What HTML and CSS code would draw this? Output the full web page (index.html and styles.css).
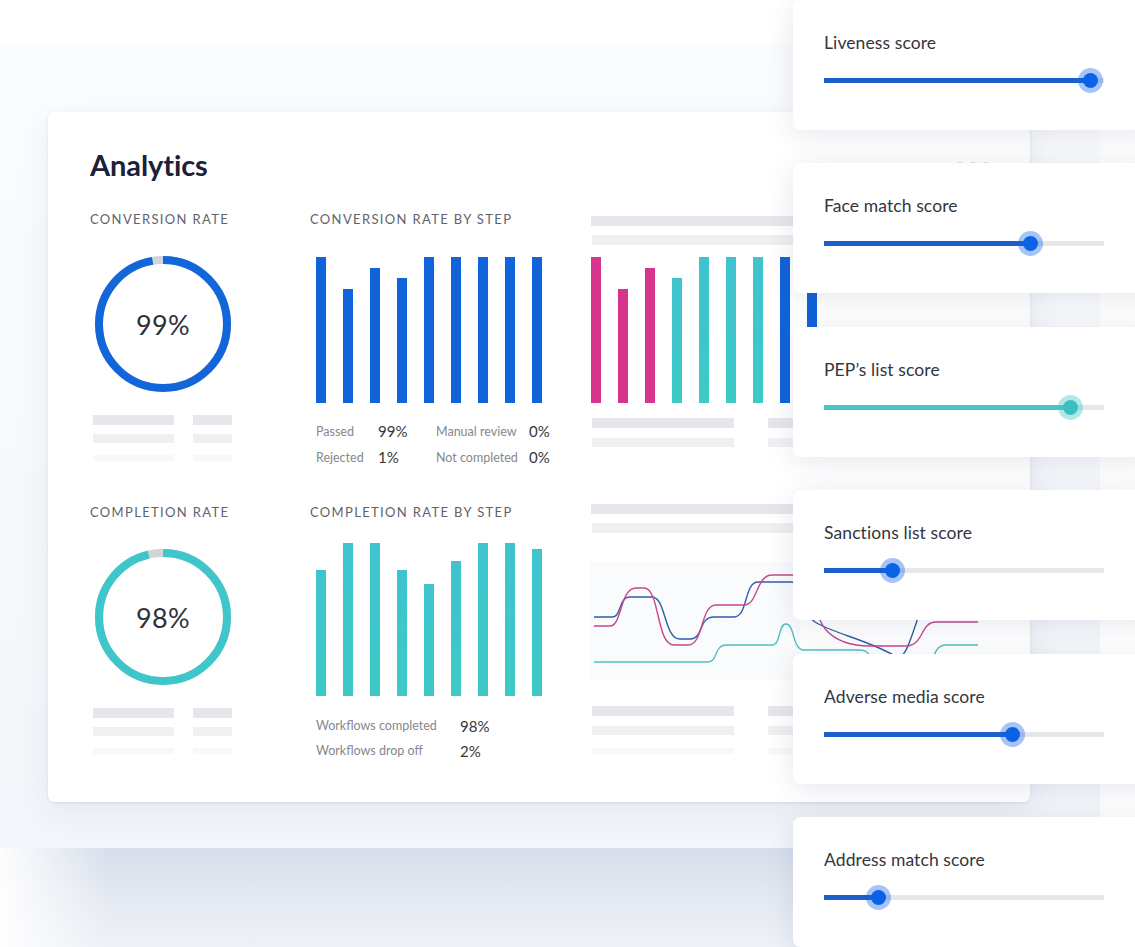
FILE: index.html
```html
<!DOCTYPE html>
<html lang="en">
<head>
<meta charset="utf-8">
<title>Analytics</title>
<link rel="stylesheet" href="styles.css">
</head>
<body>
<div class="stage">
  <div class="backdrop"></div>
  <div class="backshadow"></div>

  <section class="analytics">
    <h1 class="title">Analytics</h1>
    <div class="menu-dots"><span></span><span></span><span></span></div>

    <div class="row">
      <div class="col col-rate">
        <div class="label">Conversion rate</div>
        <div class="donut">
          <svg width="136" height="136" viewBox="0 0 136 136">
            <circle cx="68" cy="68" r="64" fill="none" stroke="#d3d4d8" stroke-width="8"/>
            <circle cx="68" cy="68" r="64" fill="none" stroke="#1366da" stroke-width="8" stroke-dasharray="391 402" transform="rotate(-90 68 68)"/>
          </svg>
          <span class="donut-val">99%</span>
        </div>
        <div class="ph-pair">
          <i class="ph ph-1 w81"></i><i class="ph ph-1 w39"></i>
          <i class="ph ph-2 w81"></i><i class="ph ph-2 w39"></i>
          <i class="ph ph-3 w81"></i><i class="ph ph-3 w39"></i>
        </div>
      </div>

      <div class="col col-step">
        <div class="label">Conversion rate by step</div>
        <div class="bars bars-a">
          <i class="bar blue" style="height:146px"></i>
          <i class="bar blue" style="height:114px"></i>
          <i class="bar blue" style="height:135px"></i>
          <i class="bar blue" style="height:125px"></i>
          <i class="bar blue" style="height:146px"></i>
          <i class="bar blue" style="height:146px"></i>
          <i class="bar blue" style="height:146px"></i>
          <i class="bar blue" style="height:146px"></i>
          <i class="bar blue" style="height:146px"></i>
        </div>
        <div class="legend legend-a">
          <span class="lg-l">Passed</span><span class="lg-v">99%</span><span class="lg-l">Manual review</span><span class="lg-v">0%</span>
          <span class="lg-l">Rejected</span><span class="lg-v">1%</span><span class="lg-l">Not completed</span><span class="lg-v">0%</span>
        </div>
      </div>

      <div class="col col-ghost">
        <div class="ph-lines">
          <i class="ph ph-1 wide"></i>
          <i class="ph ph-2 wide"></i>
        </div>
        <div class="bars bars-a bars-ghost">
          <i class="bar pink" style="height:146px"></i>
          <i class="bar pink" style="height:114px"></i>
          <i class="bar pink" style="height:135px"></i>
          <i class="bar teal" style="height:125px"></i>
          <i class="bar teal" style="height:146px"></i>
          <i class="bar teal" style="height:146px"></i>
          <i class="bar teal" style="height:146px"></i>
          <i class="bar blue" style="height:146px"></i>
          <i class="bar blue" style="height:146px"></i>
        </div>
        <div class="ph-pair ph-pair-b">
          <i class="ph ph-1 w142"></i><i class="ph ph-1 w60"></i>
          <i class="ph ph-2 w142"></i><i class="ph ph-2 w60"></i>
        </div>
      </div>
    </div>

    <div class="row">
      <div class="col col-rate">
        <div class="label">Completion rate</div>
        <div class="donut">
          <svg width="136" height="136" viewBox="0 0 136 136">
            <circle cx="68" cy="68" r="64" fill="none" stroke="#d3d4d8" stroke-width="8"/>
            <circle cx="68" cy="68" r="64" fill="none" stroke="#3ec6cb" stroke-width="8" stroke-dasharray="387 402" transform="rotate(-90 68 68)"/>
          </svg>
          <span class="donut-val">98%</span>
        </div>
        <div class="ph-pair">
          <i class="ph ph-1 w81"></i><i class="ph ph-1 w39"></i>
          <i class="ph ph-2 w81"></i><i class="ph ph-2 w39"></i>
          <i class="ph ph-3 w81"></i><i class="ph ph-3 w39"></i>
        </div>
      </div>

      <div class="col col-step">
        <div class="label">Completion rate by step</div>
        <div class="bars bars-b">
          <i class="bar teal" style="height:126px"></i>
          <i class="bar teal" style="height:153px"></i>
          <i class="bar teal" style="height:153px"></i>
          <i class="bar teal" style="height:126px"></i>
          <i class="bar teal" style="height:112px"></i>
          <i class="bar teal" style="height:135px"></i>
          <i class="bar teal" style="height:153px"></i>
          <i class="bar teal" style="height:153px"></i>
          <i class="bar teal" style="height:147px"></i>
        </div>
        <div class="legend legend-b">
          <span class="lg-l">Workflows completed</span><span class="lg-v">98%</span>
          <span class="lg-l">Workflows drop off</span><span class="lg-v">2%</span>
        </div>
      </div>

      <div class="col col-ghost">
        <div class="ph-lines ph-lines-b">
          <i class="ph ph-1 wide"></i>
          <i class="ph ph-2 wide"></i>
        </div>
        <svg class="waves" width="390" height="110" viewBox="590 560 390 110">
          <rect x="590" y="562" width="210" height="118" fill="#fafbfc"/>
          <path d="M594 662 H708 C718 662 714 645 726 645 H772 C781 645 778 624 786 624 C795 624 792 650 804 650 H860 C872 650 870 664 884 664 H924 C936 664 932 645 946 645 H978" fill="none" stroke="#52c0c4" stroke-width="1.4"/>
          <path d="M594 617 H612 C622 617 618 597 630 597 H652 C666 597 664 639 680 639 H690 C704 639 698 617 714 617 H734 C748 617 744 582 758 582 H790 C806 582 800 612 815 622 C835 634 868 640 895 656 C905 662 910 640 918 618 C924 600 930 590 950 590 H978" fill="none" stroke="#2f5ea6" stroke-width="1.4"/>
          <path d="M594 626 H610 C622 626 620 588 636 588 H644 C660 588 656 645 674 645 H688 C704 645 700 605 716 605 H744 C758 605 756 575 772 575 H796 C812 575 812 615 826 630 C836 641 850 646 870 646 H906 C924 646 920 622 936 622 H978" fill="none" stroke="#c9478c" stroke-width="1.4"/>
        </svg>
        <div class="ph-pair ph-pair-c">
          <i class="ph ph-1 w142"></i><i class="ph ph-1 w60"></i>
          <i class="ph ph-2 w142"></i><i class="ph ph-2 w60"></i>
          <i class="ph ph-3 w142"></i><i class="ph ph-3 w60"></i>
        </div>
      </div>
    </div>
  </section>

  <div class="sliders">
    <div class="s-card">
      <div class="s-label">Liveness score</div>
      <div class="track"><div class="fill" style="width:267px"><span class="thumb"></span></div></div>
    </div>
    <div class="s-card">
      <div class="s-label">Face match score</div>
      <div class="track"><div class="fill" style="width:207px"><span class="thumb"></span></div></div>
    </div>
    <div class="s-card">
      <div class="s-label">PEP’s list score</div>
      <div class="track"><div class="fill fill-teal" style="width:247px"><span class="thumb"></span></div></div>
    </div>
    <div class="s-card">
      <div class="s-label">Sanctions list score</div>
      <div class="track"><div class="fill" style="width:69px"><span class="thumb"></span></div></div>
    </div>
    <div class="s-card">
      <div class="s-label">Adverse media score</div>
      <div class="track"><div class="fill" style="width:189px"><span class="thumb"></span></div></div>
    </div>
    <div class="s-card">
      <div class="s-label">Address match score</div>
      <div class="track"><div class="fill" style="width:55px"><span class="thumb"></span></div></div>
    </div>
  </div>
</div>
</body>
</html>
```

FILE: styles.css
```css
* { box-sizing: border-box; }

html, body {
  margin: 0;
  padding: 0;
  background: #ffffff;
}

body {
  font-family: "Lato", "Open Sans", sans-serif;
  color: #333740;
}

.stage {
  position: relative;
  width: 1135px;
  height: 947px;
  overflow: hidden;
  padding: 112px 0 0 48px;
}

/* decorative background layers */
.backdrop {
  position: absolute;
  left: 0;
  top: 43px;
  width: 1100px;
  height: 805px;
  background: linear-gradient(180deg, #fbfcfd 0%, #f3f6fa 100%);
}

.backshadow {
  position: absolute;
  left: 0;
  top: 848px;
  width: 1135px;
  height: 99px;
  background:
    linear-gradient(90deg, rgba(255,255,255,0.95) 0px, rgba(255,255,255,0) 110px),
    linear-gradient(180deg, #d6deeb 0%, #e3e8f1 45%, #eef1f7 100%);
}

/* main analytics card */
.analytics {
  position: relative;
  z-index: 1;
  width: 982px;
  height: 690px;
  background: #ffffff;
  border-radius: 6px;
  box-shadow: 0 1px 3px rgba(20, 30, 60, 0.10), 0 12px 34px rgba(40, 60, 110, 0.07);
  padding: 37px 0 0 42px;
}

.title {
  margin: 0;
  font-size: 29px;
  line-height: 32px;
  font-weight: 700;
  color: #1a2138;
  letter-spacing: -0.1px;
}

.menu-dots {
  position: absolute;
  left: 907px;
  top: 50px;
  display: flex;
  gap: 3px;
}
.menu-dots span {
  width: 10px;
  height: 10px;
  border-radius: 50%;
  background: #d9dce2;
}

.row {
  display: grid;
  grid-template-columns: 220px 281px 1fr;
  height: 293px;
}
.title + .menu-dots + .row { margin-top: 30px; }

.col { display: flex; flex-direction: column; }

.label {
  font-size: 13px;
  line-height: 16px;
  letter-spacing: 1.35px;
  text-transform: uppercase;
  color: #5f636b;
  white-space: nowrap;
}

/* donut */
.donut {
  position: relative;
  width: 136px;
  height: 136px;
  margin: 29px 0 0 5px;
}
.donut svg { display: block; }
.donut-val {
  position: absolute;
  inset: 0;
  display: flex;
  align-items: center;
  justify-content: center;
  font-size: 27px;
  font-weight: 400;
  color: #2e3138;
  letter-spacing: 0.3px;
}

/* placeholders */
.ph { display: block; height: 10px; }
.ph-1 { background: #e6e7ea; }
.ph-2 { background: #eff0f2; height: 9px; }
.ph-3 { background: #f8f8f9; height: 6px; }

.ph-pair {
  display: grid;
  grid-template-columns: 81px 39px;
  column-gap: 19px;
  row-gap: 9px;
  margin: 23px 0 0 3px;
  align-items: start;
}
.ph-pair .ph-3 { margin-top: 3px; }
.ph-pair-b {
  grid-template-columns: 142px 60px;
  column-gap: 34px;
  margin: 15px 0 0 1px;
  row-gap: 10px;
}
.ph-pair-c {
  grid-template-columns: 142px 60px;
  column-gap: 34px;
  margin: 36px 0 0 1px;
  row-gap: 10px;
}

.ph-lines {
  display: flex;
  flex-direction: column;
  gap: 9px;
  margin-top: 5px;
}
.ph-lines .wide { width: 220px; }
.ph-lines .ph-2 { height: 10px; margin-left: 1px; }
.ph-lines-b { margin-top: 0; }

/* bars */
.bars {
  display: flex;
  align-items: flex-end;
  gap: 17px;
  padding-left: 6px;
}
.bars-a { height: 146px; margin-top: 30px; }
.bars-b { height: 153px; margin-top: 23px; }
.bars-ghost { margin-top: 12px; padding-left: 0; }

.bar { display: block; width: 10px; flex: none; }
.bar.blue { background: #1163d9; }
.bar.teal { background: linear-gradient(180deg, #3fc4cf 0%, #3dc9c6 100%); }
.bar.pink { background: #d6348d; }

/* legends */
.legend {
  display: grid;
  padding-left: 6px;
  align-items: center;
}
.legend-a {
  grid-template-columns: 62px 58px 93px auto;
  grid-auto-rows: 26px;
  margin-top: 15px;
}
.legend-b {
  grid-template-columns: 144px auto;
  grid-auto-rows: 25px;
  margin-top: 17px;
}
.lg-l {
  font-size: 12.5px;
  color: #85888e;
  white-space: nowrap;
}
.lg-v {
  font-size: 15px;
  color: #34373d;
}

.waves {
  display: block;
  margin-top: 27px;
  margin-left: -1px;
  overflow: visible;
}

/* slider cards overlay */
.sliders {
  position: absolute;
  left: 793px;
  top: 0;
  width: 370px;
  z-index: 2;
  display: flex;
  flex-direction: column;
  gap: 33.4px;
}

.s-card {
  height: 130px;
  background: #ffffff;
  border-radius: 8px;
  box-shadow: 0 4px 28px rgba(40, 60, 110, 0.12);
  padding: 33px 0 0 31px;
}

.s-label {
  font-size: 17.5px;
  line-height: 20px;
  color: #33363d;
  letter-spacing: 0.1px;
}

.track {
  position: relative;
  width: 280px;
  height: 5px;
  margin-top: 25px;
  background: #e6e7ea;
}
.fill {
  position: relative;
  height: 5px;
  background: #1a5fca;
}
.fill-teal { background: #4cc3c6; }

.thumb {
  position: absolute;
  right: -12px;
  top: -10px;
  width: 25px;
  height: 25px;
  border-radius: 50%;
  background: rgba(20, 100, 228, 0.38);
  display: flex;
  align-items: center;
  justify-content: center;
}
.thumb::after {
  content: "";
  width: 15px;
  height: 15px;
  border-radius: 50%;
  background: #0b62e6;
}
.fill-teal .thumb { background: rgba(60, 200, 200, 0.40); }
.fill-teal .thumb::after { background: #3cbfc1; }
```
